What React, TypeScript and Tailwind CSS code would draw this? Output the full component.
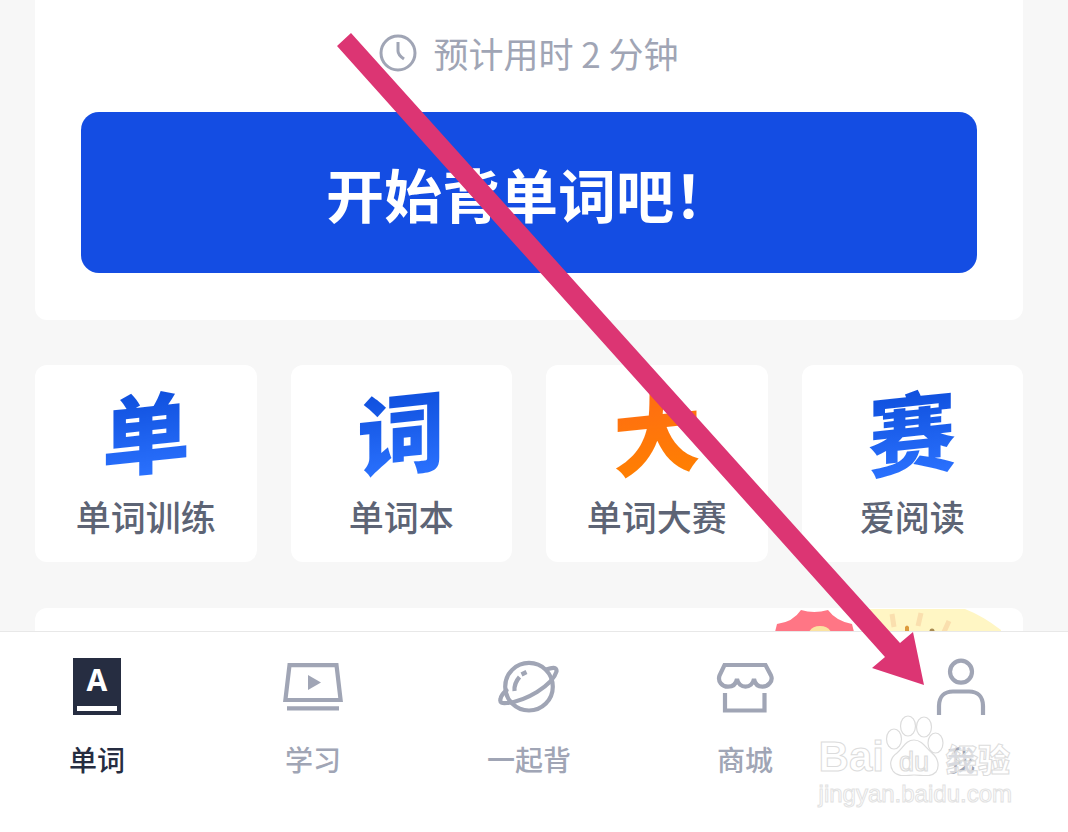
import React from "react";

type IconProps = { children: React.ReactNode };

function NavIcon({ children }: IconProps) {
  return (
    <svg
      viewBox="0 0 64 60"
      className="h-[60px] w-16"
      fill="none"
      stroke="currentColor"
      strokeWidth="4.2"
      aria-hidden="true"
    >
      {children}
    </svg>
  );
}

const BookIcon = () => (
  <NavIcon>
    <path d="M8 1H56V58H8Z" fill="currentColor" stroke="none" />
    <path d="M12 49H52V54H12Z" fill="#fff" stroke="none" />
    <text
      x="32"
      y="34"
      textAnchor="middle"
      fill="#fff"
      stroke="none"
      className="font-['Noto_Sans','Liberation_Sans',sans-serif] text-[30px] font-bold"
    >
      A
    </text>
  </NavIcon>
);

const StudyIcon = () => (
  <NavIcon>
    <path d="M8.5 8.2H55.5L59.6 43H4.4Z" />
    <path d="M6 51.3H58" />
    <path d="M27 18L40 25.5L27 33Z" fill="currentColor" stroke="none" />
  </NavIcon>
);

const PlanetIcon = () => (
  <NavIcon>
    <circle cx="32" cy="29.7" r="23.8" />
    <path
      strokeLinecap="round"
      strokeLinejoin="round"
      d="M49 12.5C55 10.5 60 9.5 59.5 14.5C58 20 51 28 40 35C31 40.5 20 45 10 46C5 46.5 2.500 46 3.500 42C4 39 6 36 9.500 33.500"
    />
    <path d="M17.500 34C17 28 19 24 22.500 20M24.500 17.500L29.500 15" />
  </NavIcon>
);

const ShopIcon = () => (
  <NavIcon>
    <path
      strokeLinejoin="miter"
      d="M11.500 8H52.500L58 18.500C60.500 24 55 29.700 49.500 29.700C45 29.700 42 27 41 22C40 27 36.500 29.700 32.500 29.700C28.500 29.700 25 27 24 22C23 27 20 29.700 15 29.700C9 29.700 4.500 24.500 6.500 18.500Z"
    />
    <path d="M12 36V53.500H51.500V36" />
  </NavIcon>
);

const UserIcon = () => (
  <NavIcon>
    <circle cx="32" cy="14.700" r="11" />
    <path d="M10 58V49C10 40 15 34.500 24 34.500H40C49 34.500 54 40 54 49V58" />
  </NavIcon>
);

const features = [
  { glyph: "单", label: "单词训练", tone: "from-[#0b4bd9] to-[#2b72ff]" },
  { glyph: "词", label: "单词本", tone: "from-[#0b4bd9] to-[#2b72ff]" },
  { glyph: "大", label: "单词大赛", tone: "from-[#ff6a13] to-[#ff8000]" },
  { glyph: "赛", label: "爱阅读", tone: "from-[#0b4bd9] to-[#2b72ff]" },
];

const tabs = [
  { label: "单词", Icon: BookIcon, active: true },
  { label: "学习", Icon: StudyIcon, active: false },
  { label: "一起背", Icon: PlanetIcon, active: false },
  { label: "商城", Icon: ShopIcon, active: false },
  { label: "我", Icon: UserIcon, active: false },
];

function PromoArt() {
  return (
    <svg viewBox="770 608 234 24" className="h-6 w-[234px] shrink-0" aria-hidden="true">
      <path
        d="M776 632L778 624Q794 622 802 610Q815 614 829 610Q837 621 853 624L855 632Z"
        fill="#ff7685"
      />
      <path d="M810 632Q813 626 821 626Q829 626 832 632Z" fill="#fbe3a0" />
      <path d="M866 609H966Q984 616 1002 630V632H880Z" fill="#fff6c4" />
      <path
        d="M893 614L895 627M922 613L919 626M950 621L945 632"
        stroke="#fadfae"
        strokeWidth="5"
      />
      <path d="M906 632V627Q908 624 910 627V632Z" fill="#dd9a3c" />
      <circle cx="933" cy="631" r="2.500" fill="#a98b52" />
    </svg>
  );
}

function Watermark() {
  return (
    <div className="pointer-events-none absolute top-[84px] right-14 flex flex-col text-white/60">
      <div className="flex h-[60px] items-end">
        <span className="font-['Liberation_Sans',sans-serif] text-[42px] leading-[38px] font-bold [-webkit-text-stroke:1px_#dcdcdc]">
          Bai
        </span>
        <svg viewBox="882 714 62 64" className="h-16 w-[62px]" aria-hidden="true">
          <g fill="#fff" fillOpacity="0.7" stroke="#dcdcdc" strokeWidth="1.200">
            <ellipse cx="892" cy="741" rx="7.500" ry="10" />
            <ellipse cx="906" cy="728" rx="7.500" ry="10" />
            <ellipse cx="922" cy="729" rx="7.500" ry="10" />
            <ellipse cx="933.500" cy="745" rx="7.500" ry="10" />
            <path d="M912 742C904 742 901 750 895 755C888 760 887 767 891 773C896 780 905 777 912 777C920 777 928 780 934 774C938 768 936 760 930 755C924 750 920 742 912 742Z" />
            <text
              x="912"
              y="773"
              textAnchor="middle"
              className="font-['Liberation_Sans',sans-serif] text-[27px]"
            >
              du
            </text>
          </g>
        </svg>
        <span className="font-['Noto_Sans_CJK_SC',sans-serif] text-[32px] leading-[36px] font-black [-webkit-text-stroke:1px_#dcdcdc]">
          经验
        </span>
      </div>
      <span className="font-['Liberation_Sans',sans-serif] text-2xl leading-9 [-webkit-text-stroke:1px_#e2e2e2]">
        jingyan.baidu.com
      </span>
    </div>
  );
}

function PointerArrow() {
  return (
    <svg
      viewBox="0 0 600 660"
      className="pointer-events-none absolute top-[30px] left-[330px] h-[660px] w-[600px]"
      aria-hidden="true"
    >
      <path d="M7 16L21 3L570 613L583 602L594 655L542 638L555 627Z" fill="#dc3573" />
    </svg>
  );
}

export default function App() {
  return (
    <div className="relative flex min-h-screen flex-col overflow-hidden bg-[#f7f7f7] font-['Noto_Sans_CJK_SC',sans-serif]">
      <main className="flex flex-col pr-[45px] pl-[35px]">
        <section className="rounded-b-xl bg-white px-[46px] pt-[27px] pb-[47px]">
          <p className="flex items-center justify-center gap-4 text-[35px] leading-[52px] text-[#a0a5b5]">
            <svg
              viewBox="0 0 38 38"
              className="size-[38px]"
              fill="none"
              stroke="currentColor"
              strokeWidth="3"
              aria-hidden="true"
            >
              <circle cx="19" cy="19" r="17" />
              <path d="M19 8V17Q19 21 25 25" />
            </svg>
            <span>预计用时 2 分钟</span>
          </p>
          <button
            type="button"
            className="mt-[33px] w-full rounded-[18px] bg-[#144de3] pt-[41px] pb-[39px] text-[58px] leading-[81px] font-bold text-white"
          >
            开始背单词吧！
          </button>
        </section>

        <section className="mt-[45px] grid grid-cols-4 gap-[34px]">
          {features.map(({ glyph, label, tone }) => (
            <a
              key={label}
              href="#"
              className="flex flex-col items-center rounded-xl bg-white pt-[14px] pb-6"
            >
              <span
                aria-hidden="true"
                className={`-skew-y-6 bg-linear-to-b bg-clip-text text-[88px] leading-[100px] font-black text-transparent ${tone}`}
              >
                {glyph}
              </span>
              <span className="mt-[15px] text-[35px] leading-[44px] font-medium text-[#5d6475]">
                {label}
              </span>
            </a>
          ))}
        </section>

        <section className="mt-[46px] flex h-[23px] justify-end overflow-hidden rounded-t-xl bg-white pr-5">
          <PromoArt />
        </section>
      </main>

      <nav className="relative flex grow items-start justify-between border-t border-[#e8e8e8] bg-white pt-[25px] pr-[53px] pb-12 pl-[43px]">
        {tabs.map(({ label, Icon, active }) => (
          <a
            key={label}
            href="#"
            aria-current={active ? "page" : undefined}
            className={`flex w-27 flex-col items-center gap-[22px] font-medium ${
              active ? "text-[#262d41]" : "text-[#a0a5b5]"
            }`}
          >
            <Icon />
            <span className="text-[28px] leading-10">{label}</span>
          </a>
        ))}
        <Watermark />
      </nav>

      <PointerArrow />
    </div>
  );
}
